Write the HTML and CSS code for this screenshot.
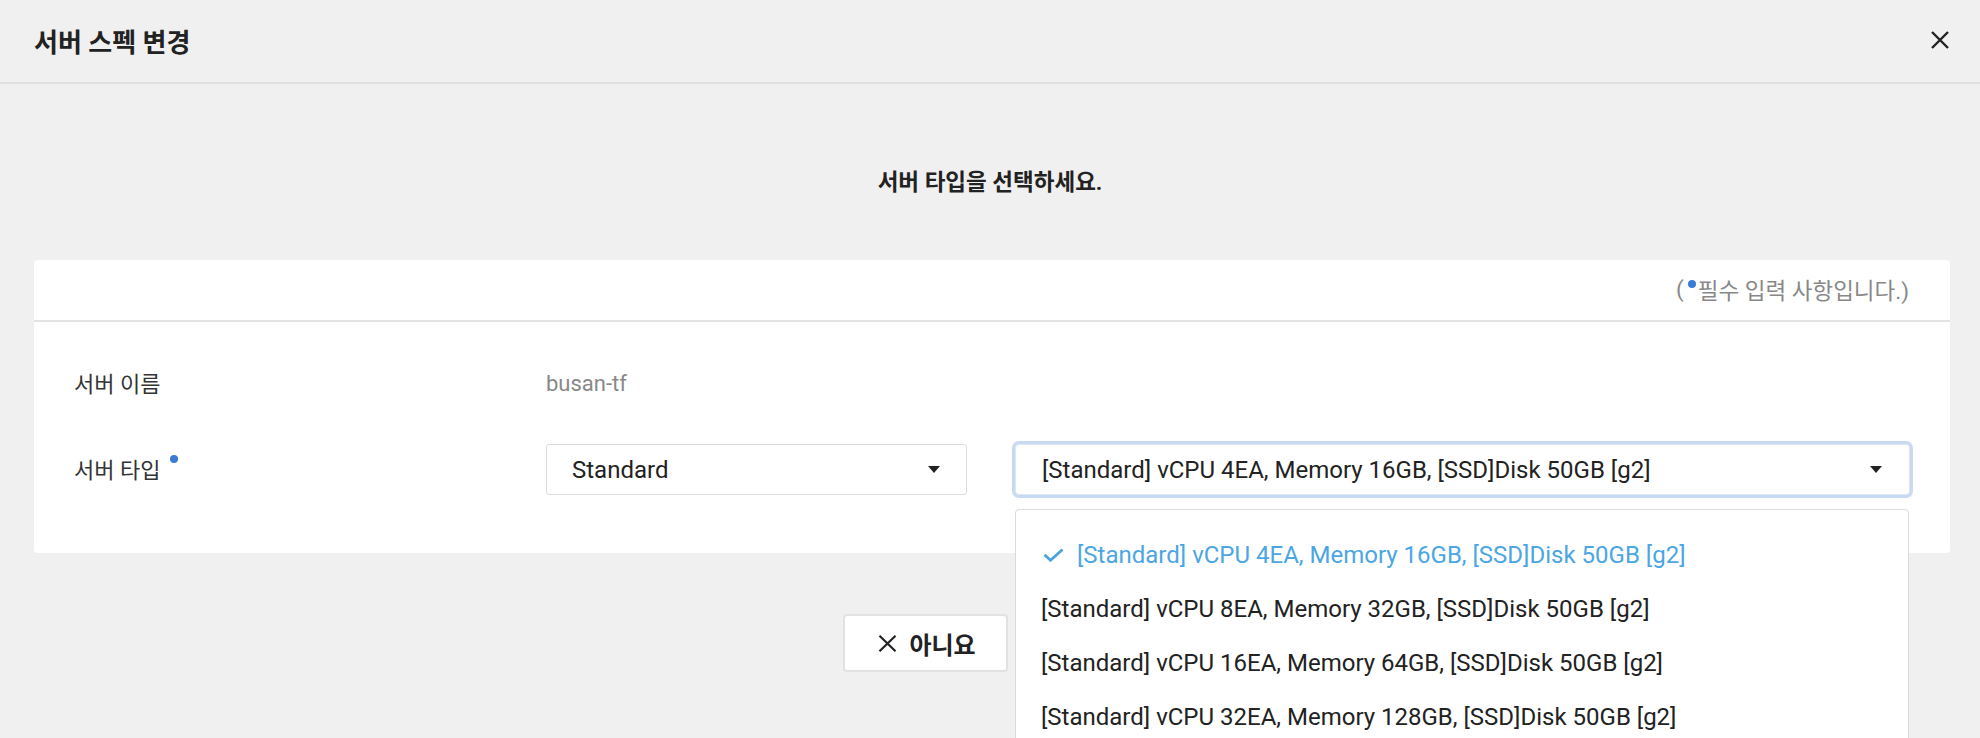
FILE: index.html
```html
<!DOCTYPE html>
<html lang="ko">
<head>
<meta charset="utf-8">
<title>서버 스펙 변경</title>
<link rel="stylesheet" href="styles.css">
</head>
<body>
<div class="modal">
  <header class="modal-header">
    <h1 class="modal-title">서버 스펙 변경</h1>
    <button class="close-btn" aria-label="닫기">
      <svg width="18" height="18" viewBox="0 0 18 18"><path d="M1 1L17 17M17 1L1 17" stroke="#222" stroke-width="2.4" fill="none"/></svg>
    </button>
  </header>
  <p class="subtitle">서버 타입을 선택하세요.</p>
  <section class="card">
    <div class="card-head">(<span class="req-dot"></span>필수 입력 사항입니다.)</div>
    <div class="card-body">
      <div class="label">서버 이름</div>
      <div class="value wide">busan-tf</div>
      <div class="label">서버 타입<span class="req-dot sup"></span></div>
      <div class="select">
        <span>Standard</span>
        <span class="caret"></span>
      </div>
      <div class="select-wrap">
        <div class="select focused">
          <span>[Standard] vCPU 4EA, Memory 16GB, [SSD]Disk 50GB [g2]</span>
          <span class="caret"></span>
        </div>
        <ul class="dropdown">
          <li class="option selected"><svg class="check" width="21" height="14" viewBox="0 0 21 14"><path d="M1.5 6.8L7.5 12.3L19.5 1.5" stroke="#4aa3df" stroke-width="2.8" fill="none"/></svg><span>[Standard] vCPU 4EA, Memory 16GB, [SSD]Disk 50GB [g2]</span></li>
          <li class="option">[Standard] vCPU 8EA, Memory 32GB, [SSD]Disk 50GB [g2]</li>
          <li class="option">[Standard] vCPU 16EA, Memory 64GB, [SSD]Disk 50GB [g2]</li>
          <li class="option">[Standard] vCPU 32EA, Memory 128GB, [SSD]Disk 50GB [g2]</li>
        </ul>
      </div>
    </div>
  </section>
  <div class="actions">
    <button class="btn">
      <svg width="19" height="17" viewBox="0 0 19 17"><path d="M1.5 0.8L17.5 16.2M17.5 0.8L1.5 16.2" stroke="#222" stroke-width="2.2" fill="none"/></svg>
      아니요
    </button>
    <button class="btn btn-confirm" aria-label="확인">
      <svg width="20" height="14" viewBox="0 0 20 14"><path d="M1.5 7L7.5 12.5L18.5 1.5" stroke="#222" stroke-width="2.2" fill="none"/></svg>
    </button>
  </div>
</div>
</body>
</html>
```

FILE: styles.css
```css
* { box-sizing: border-box; }
html, body { margin: 0; padding: 0; }
body {
  background: #f0f0f0;
  font-family: Roboto, "Noto Sans CJK KR", sans-serif;
  color: #222;
  width: 1980px;
  height: 738px;
  overflow: hidden;
}
.modal-header {
  height: 84px;
  border-bottom: 2px solid #e0e0e0;
  display: flex;
  align-items: center;
  justify-content: space-between;
  padding: 0 31px 2px 34px;
}
.modal-title {
  margin: 0;
  font-size: 26px;
  font-weight: 700;
  color: #222;
}
.close-btn {
  border: 0;
  background: transparent;
  padding: 0;
  width: 18px;
  height: 18px;
  display: flex;
}
.subtitle {
  margin: 83px 0 0;
  height: 30px;
  line-height: 30px;
  text-align: center;
  font-size: 22.5px;
  font-weight: 700;
  color: #222;
}
.card {
  margin: 63px 30px 0 34px;
  background: #fff;
  border-radius: 4px;
}
.card-head {
  height: 62px;
  border-bottom: 2px solid #e3e3e3;
  display: flex;
  align-items: center;
  justify-content: flex-end;
  padding: 0 41px 2px 0;
  font-size: 22.5px;
  color: #888;
}
.req-dot {
  display: inline-block;
  width: 8px;
  height: 8px;
  border-radius: 50%;
  background: #3a7bd5;
  align-self: flex-start;
  margin: 20px 2px 0 4px;
}
.card-body {
  display: grid;
  grid-template-columns: 424px 421px 1fr;
  grid-template-rows: 51px 51px;
  column-gap: 48px;
  row-gap: 35px;
  align-items: center;
  padding: 36px 40px 58px 40px;
}
.label {
  font-size: 22px;
  color: #333;
  display: flex;
  align-items: flex-start;
  margin-top: -4px;
}
.req-dot.sup {
  margin: 3px 0 0 10px;
}
.value {
  font-size: 22px;
  color: #888;
}
.value.wide { grid-column: 2 / 4; }
.select {
  height: 51px;
  border: 1px solid #dcdcdc;
  border-radius: 3px;
  display: flex;
  align-items: center;
  justify-content: space-between;
  padding: 0 26px 0 25px;
  font-size: 24px;
  color: #222;
  background: #fff;
}
.caret {
  width: 0;
  height: 0;
  border-left: 6px solid transparent;
  border-right: 6px solid transparent;
  border-top: 7px solid #222;
}
.select-wrap {
  position: relative;
  height: 51px;
}
.select.focused {
  border-color: #dde6f2;
  box-shadow: 0 0 0 3px #c8daf2;
  border-radius: 4px;
  padding-left: 26px;
  padding-right: 27px;
}
.dropdown {
  position: absolute;
  left: 0;
  right: 1px;
  top: 65px;
  margin: 0;
  padding: 18px 0 0;
  list-style: none;
  background: #fff;
  border: 1px solid #dadada;
  border-radius: 4px;
  height: 260px;
  z-index: 2;
}
.option {
  height: 54px;
  display: flex;
  align-items: center;
  padding-left: 25px;
  font-size: 24px;
  color: #222;
  white-space: nowrap;
}
.option.selected {
  color: #4ba6e3;
}
.check {
  margin: 0 13px 0 2px;
  flex: none;
}
.actions {
  display: flex;
  justify-content: center;
  gap: 10px;
  margin-top: 61px;
}
.btn {
  height: 58px;
  min-width: 119px;
  padding: 0 30px 0 33px;
  border: 2px solid #e2e2e2;
  border-radius: 4px;
  background: #fff;
  font-family: Roboto, "Noto Sans CJK KR", sans-serif;
  font-size: 24px;
  font-weight: 700;
  color: #222;
  display: flex;
  align-items: center;
  justify-content: center;
  gap: 12px;
}
```
